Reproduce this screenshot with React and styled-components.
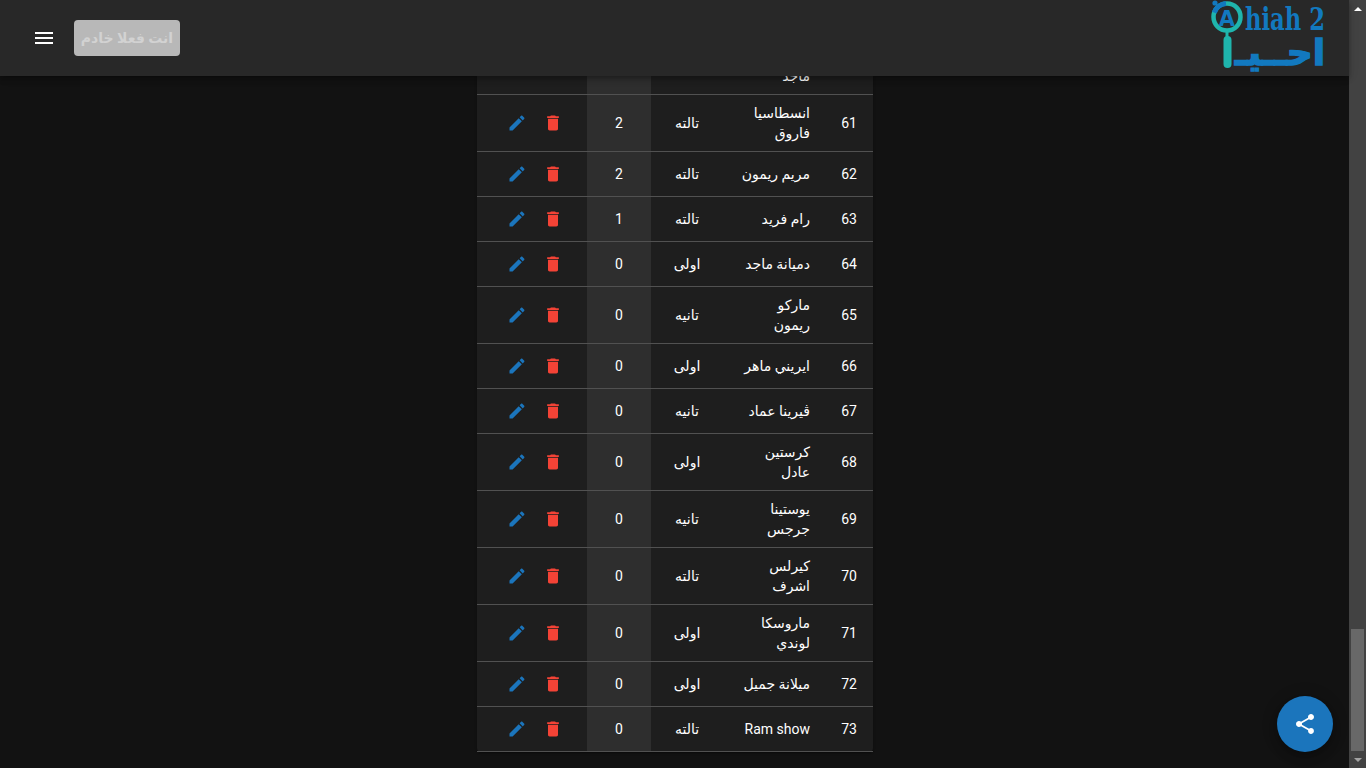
import React from "react";
import styled, { createGlobalStyle } from "styled-components";

const Global = createGlobalStyle`
  html, body { margin: 0; height: 100%; overflow: hidden; background: #121212; }
  body { font-family: Roboto, "Noto Sans", "DejaVu Sans", sans-serif; color: #fff; }
  #root { height: 100%; }
`;

const Page = styled.div`
  display: flex;
  height: 768px;
  overflow: hidden;
  position: relative;
`;
const Column = styled.div`
  flex: 1;
  min-width: 0;
  display: flex;
  flex-direction: column;
`;
const Header = styled.header`
  flex: none;
  height: 76px;
  box-sizing: border-box;
  padding: 0 19px 0 32px;
  display: flex;
  align-items: center;
  background: #282828;
  box-shadow: 0 2px 4px -1px rgba(0,0,0,.2), 0 4px 5px rgba(0,0,0,.14), 0 1px 10px rgba(0,0,0,.12);
  position: relative;
  z-index: 2;
`;
const MenuIcon = styled.svg`
  width: 24px;
  height: 24px;
  fill: #fff;
  flex: none;
  margin-right: 18px;
`;
const ServantButton = styled.button`
  width: 106px;
  height: 36px;
  border: 0;
  border-radius: 4px;
  padding: 0;
  background: #b8b8b8;
  color: #d2d2d2;
  font: 700 14px Roboto, "Noto Sans", "DejaVu Sans", sans-serif;
  direction: rtl;
`;
const Logo = styled.svg`
  margin-left: auto;
  width: 125px;
  height: 76px;
  flex: none;
`;
const Main = styled.main`
  flex: 1;
  min-height: 0;
  overflow: hidden;
  display: flex;
  flex-direction: column;
  justify-content: flex-end;
  align-items: center;
  padding: 0 0 16px 1px;
`;
const TableCard = styled.div`
  width: 396px;
  background: #1e1e1e;
  border-radius: 0 0 4px 4px;
  box-shadow: 0 2px 1px -1px rgba(0,0,0,.2), 0 1px 1px rgba(0,0,0,.14), 0 1px 3px rgba(0,0,0,.12);
`;
const Table = styled.table`
  width: 396px;
  border-collapse: collapse;
  table-layout: fixed;
  direction: rtl;
  font-size: 14px;
  line-height: 20px;
`;
const Row = styled.tr`
  height: ${p => (p.$tall ? 57 : 45)}px;
`;
const Cell = styled.td`
  padding: 0;
  border-bottom: 1px solid #515151;
  color: #fff;
  vertical-align: middle;
  white-space: nowrap;
`;
const NumCell = styled(Cell)`
  width: 47px;
  padding-right: 16px;
  box-sizing: border-box;
  text-align: right;
`;
const NameCell = styled(Cell)`
  width: 103px;
  padding-right: 16px;
  box-sizing: border-box;
  text-align: right;
`;
const NameLine = styled.span`
  display: block;
`;
const ClassCell = styled(Cell)`
  width: 72px;
  text-align: center;
`;
const CountCell = styled(Cell)`
  width: 64px;
  text-align: center;
  background: #2e2e2e;
`;
const ActionCell = styled(Cell)`
  width: 110px;
  padding-right: 16px;
  box-sizing: border-box;
`;
const Actions = styled.div`
  display: flex;
`;
const IconSlot = styled.span`
  width: 36px;
  height: 36px;
  display: flex;
  align-items: center;
  justify-content: center;
  svg { width: 20px; height: 20px; fill: ${p => p.$color}; }
`;
const Scrollbar = styled.div`
  flex: none;
  width: 17px;
  background: #424242;
  display: flex;
  flex-direction: column;
  align-items: center;
`;
const ArrowBox = styled.div`
  flex: none;
  height: 17px;
  display: flex;
  align-items: center;
  justify-content: center;
`;
const ArrowUp = styled.span`
  border-left: 4px solid transparent;
  border-right: 4px solid transparent;
  border-bottom: 4px solid #fff;
`;
const ArrowDown = styled.span`
  border-left: 4px solid transparent;
  border-right: 4px solid transparent;
  border-top: 4px solid #a3a3a3;
`;
const Track = styled.div`
  flex: 1;
`;
const Thumb = styled.div`
  flex: none;
  width: 13px;
  height: 122px;
  background: #686868;
`;
const Fab = styled.button`
  position: absolute;
  left: 1277px;
  top: 696px;
  width: 56px;
  height: 56px;
  padding: 0;
  border: 0;
  border-radius: 50%;
  background: #1b75bc;
  display: flex;
  align-items: center;
  justify-content: center;
  box-shadow: 0 3px 5px -1px rgba(0,0,0,.2), 0 6px 10px rgba(0,0,0,.14), 0 1px 18px rgba(0,0,0,.12);
  svg { width: 24px; height: 24px; fill: #fff; }
`;

const rows = [
  { n: 60, name: ["ماريا", "ماجد"], cls: "اولى", c: 2 },
  { n: 61, name: ["انسطاسيا", "فاروق"], cls: "تالته", c: 2 },
  { n: 62, name: ["مريم ريمون"], cls: "تالته", c: 2 },
  { n: 63, name: ["رام فريد"], cls: "تالته", c: 1 },
  { n: 64, name: ["دميانة ماجد"], cls: "اولى", c: 0 },
  { n: 65, name: ["ماركو", "ريمون"], cls: "تانيه", c: 0 },
  { n: 66, name: ["ايريني ماهر"], cls: "اولى", c: 0 },
  { n: 67, name: ["ڤيرينا عماد"], cls: "تانيه", c: 0 },
  { n: 68, name: ["كرستين", "عادل"], cls: "اولى", c: 0 },
  { n: 69, name: ["يوستينا", "جرجس"], cls: "تانيه", c: 0 },
  { n: 70, name: ["كيرلس", "اشرف"], cls: "تالته", c: 0 },
  { n: 71, name: ["ماروسكا", "لوندي"], cls: "اولى", c: 0 },
  { n: 72, name: ["ميلانة جميل"], cls: "اولى", c: 0 },
  { n: 73, name: ["Ram show"], cls: "تالته", c: 0 },
];

const TrashPath = "M6 19c0 1.1.9 2 2 2h8c1.1 0 2-.9 2-2V7H6v12zM19 4h-3.5l-1-1h-5l-1 1H5v2h14V4z";
const EditPath = "M3 17.25V21h3.75L17.81 9.94l-3.75-3.75L3 17.25zM20.71 7.04c.39-.39.39-1.02 0-1.41l-2.34-2.34c-.39-.39-1.02-.39-1.41 0l-1.83 1.83 3.75 3.75 1.83-1.83z";
const SharePath = "M18 16.08c-.76 0-1.44.3-1.96.77L8.91 12.7c.05-.23.09-.46.09-.7s-.04-.47-.09-.7l7.05-4.11c.54.5 1.25.81 2.04.81 1.66 0 3-1.34 3-3s-1.34-3-3-3-3 1.34-3 3c0 .24.04.47.09.7L8.04 9.81C7.5 9.31 6.79 9 6 9c-1.66 0-3 1.34-3 3s1.34 3 3 3c.79 0 1.5-.31 2.04-.81l7.12 4.16c-.05.21-.08.43-.08.65 0 1.61 1.31 2.92 2.92 2.92 1.61 0 2.92-1.31 2.92-2.92s-1.31-2.92-2.92-2.92z";

function AhiahLogo() {
  const blue = "#1279bf";
  const teal = "#1fb5ad";
  return (
    <Logo viewBox="1205 0 125 76">
      <circle cx="1215" cy="3" r="2.6" fill={blue} />
      <circle cx="1227" cy="17" r="13.5" fill="none" stroke={teal} strokeWidth="4.5" />
      <path d="M1214.3 12.6 A13.5 13.5 0 0 1 1226 3.5" fill="none" stroke={blue} strokeWidth="5" />
      <text x="1227" y="26" textAnchor="middle" fontFamily="'DejaVu Sans', sans-serif" fontWeight="700" fontSize="21" fill={blue}>A</text>
      <text x="1245" y="30" textLength="80" lengthAdjust="spacingAndGlyphs" fontFamily="'DejaVu Serif', serif" fontWeight="700" fontSize="31" fill={blue}>hiah 2</text>
      <text x="1325" y="65" textAnchor="start" direction="rtl" fontFamily="'DejaVu Sans', sans-serif" fontWeight="700" fontSize="36" fill={blue} stroke={blue} strokeWidth="1.5" style={{ unicodeBidi: "normal" }}>احــيـ</text>
      <rect x="1225.5" y="31" width="3" height="6" fill={teal} />
      <rect x="1223.5" y="36" width="8" height="32" rx="4" fill={teal} />
    </Logo>
  );
}

export default function App() {
  return (
    <Page>
      <Global />
      <Column>
        <Header>
          <MenuIcon viewBox="0 0 24 24"><path d="M3 18h18v-2H3v2zm0-5h18v-2H3v2zm0-7v2h18V6H3z" /></MenuIcon>
          <ServantButton disabled>انت فعلا خادم</ServantButton>
          <AhiahLogo />
        </Header>
        <Main>
          <TableCard>
            <Table>
              <tbody>
                {rows.map(r => (
                  <Row key={r.n} $tall={r.name.length > 1}>
                    <NumCell>{r.n}</NumCell>
                    <NameCell>{r.name.map(l => <NameLine key={l}>{l}</NameLine>)}</NameCell>
                    <ClassCell>{r.cls}</ClassCell>
                    <CountCell>{r.c}</CountCell>
                    <ActionCell>
                      <Actions>
                        <IconSlot $color="#f44336"><svg viewBox="0 0 24 24"><path d={TrashPath} /></svg></IconSlot>
                        <IconSlot $color="#1b75bc"><svg viewBox="0 0 24 24"><path d={EditPath} /></svg></IconSlot>
                      </Actions>
                    </ActionCell>
                  </Row>
                ))}
              </tbody>
            </Table>
          </TableCard>
        </Main>
      </Column>
      <Scrollbar>
        <ArrowBox><ArrowUp /></ArrowBox>
        <Track />
        <Thumb />
        <ArrowBox><ArrowDown /></ArrowBox>
      </Scrollbar>
      <Fab><svg viewBox="0 0 24 24"><path d={SharePath} /></svg></Fab>
    </Page>
  );
}
